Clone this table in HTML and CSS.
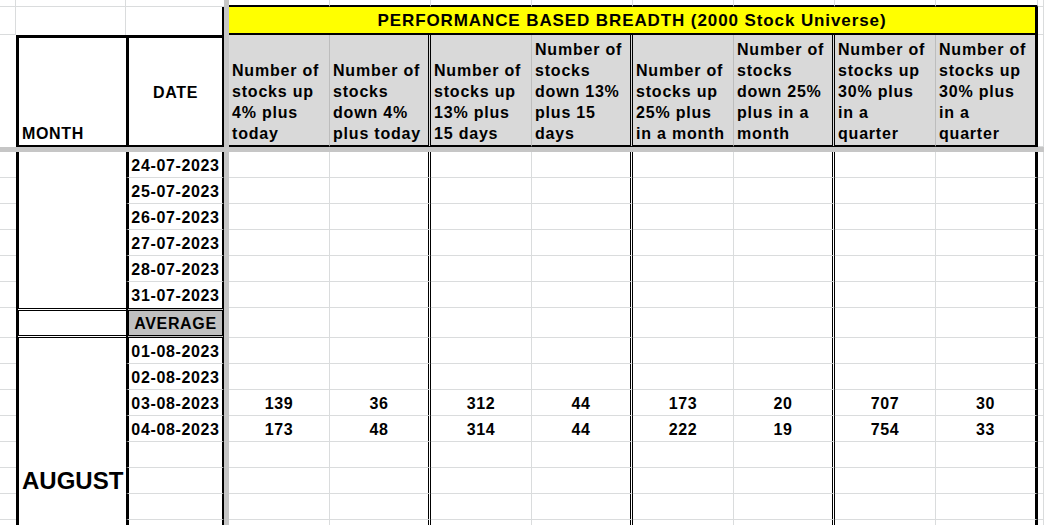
FILE: index.html
```html
<!DOCTYPE html>
<html lang="en">
<head>
<meta charset="utf-8">
<title>Performance Based Breadth</title>
<link rel="stylesheet" href="styles.css">
</head>
<body>
<div class="sheet">
  <div class="tl">
    <div></div><div></div><div class="c1"></div>
    <div></div><div class="b2"></div><div class="c2"></div>
    <div class="a3"></div>
    <div class="b3"><span>MONTH</span></div>
    <div class="c3">DATE</div>
  </div>

  <div class="gut-v"></div>
  <div class="gut-h"></div>

  <div class="tr">
    <div class="r1"></div><div class="r1"></div><div class="r1"></div><div class="r1"></div><div class="r1"></div><div class="r1"></div><div class="r1"></div><div class="r1"></div><div></div>
    <div class="title">PERFORMANCE BASED BREADTH (2000 Stock Universe)</div><div></div>
    <div class="h"><span>Number of<br>stocks up<br>4% plus<br>today</span></div>
    <div class="h dbl"><span>Number of<br>stocks<br>down 4%<br>plus today</span></div>
    <div class="h"><span>Number of<br>stocks up<br>13% plus<br>15 days</span></div>
    <div class="h dbl"><span>Number of<br>stocks<br>down 13%<br>plus 15<br>days</span></div>
    <div class="h"><span>Number of<br>stocks up<br>25% plus<br>in a month</span></div>
    <div class="h dbl"><span>Number of<br>stocks<br>down 25%<br>plus in a<br>month</span></div>
    <div class="h"><span>Number of<br>stocks up<br>30% plus<br>in a<br>quarter</span></div>
    <div class="h end"><span>Number of<br>stocks up<br>30% plus<br>in a<br>quarter</span></div>
    <div></div>
  </div>

  <div class="bl">
    <div></div><div class="mj"></div><div class="d">24-07-2023</div>
    <div></div><div class="d">25-07-2023</div>
    <div></div><div class="d">26-07-2023</div>
    <div></div><div class="d">27-07-2023</div>
    <div></div><div class="d">28-07-2023</div>
    <div></div><div class="d last">31-07-2023</div>
    <div></div><div class="avg-b"></div><div class="avg-c">AVERAGE</div>
    <div></div><div class="ma">AUGUST</div><div class="d">01-08-2023</div>
    <div></div><div class="d">02-08-2023</div>
    <div></div><div class="d">03-08-2023</div>
    <div></div><div class="d">04-08-2023</div>
    <div></div><div class="d"></div>
    <div></div><div class="d"></div>
    <div></div><div class="d"></div>
    <div></div><div class="d"></div>
  </div>

  <div class="br">
    <div></div><div></div><div></div><div></div><div></div><div></div><div></div><div></div><div></div>
    <div></div><div></div><div></div><div></div><div></div><div></div><div></div><div></div><div></div>
    <div></div><div></div><div></div><div></div><div></div><div></div><div></div><div></div><div></div>
    <div></div><div></div><div></div><div></div><div></div><div></div><div></div><div></div><div></div>
    <div></div><div></div><div></div><div></div><div></div><div></div><div></div><div></div><div></div>
    <div></div><div></div><div></div><div></div><div></div><div></div><div></div><div></div><div></div>
    <div></div><div></div><div></div><div></div><div></div><div></div><div></div><div></div><div></div>
    <div></div><div></div><div></div><div></div><div></div><div></div><div></div><div></div><div></div>
    <div></div><div></div><div></div><div></div><div></div><div></div><div></div><div></div><div></div>
    <div>139</div><div>36</div><div>312</div><div>44</div><div>173</div><div>20</div><div>707</div><div>30</div><div></div>
    <div>173</div><div>48</div><div>314</div><div>44</div><div>222</div><div>19</div><div>754</div><div>33</div><div></div>
    <div></div><div></div><div></div><div></div><div></div><div></div><div></div><div></div><div></div>
    <div></div><div></div><div></div><div></div><div></div><div></div><div></div><div></div><div></div>
    <div></div><div></div><div></div><div></div><div></div><div></div><div></div><div></div><div></div>
    <div></div><div></div><div></div><div></div><div></div><div></div><div></div><div></div><div></div>
  </div>
</div>
</body>
</html>
```

FILE: styles.css
```css
* { box-sizing: border-box; margin: 0; padding: 0; }

:root {
  --grid: #dadcdd;
  --freeze: #c6c6c6;
}

html, body {
  width: 1044px;
  height: 525px;
  overflow: hidden;
  background: #fff;
}

body {
  font-family: "Liberation Sans", Arial, sans-serif;
  font-weight: bold;
  font-size: 16px;
  letter-spacing: 0.65px;
  color: #000;
}

.sheet {
  display: grid;
  grid-template-columns: 224px 5px minmax(0, 1fr);
  grid-template-rows: 147px 5px minmax(0, 1fr);
  width: 1044px;
  height: 525px;
  overflow: hidden;
}

.gut-v { grid-column: 2; grid-row: 1 / 4; background: var(--freeze); }
.gut-h { grid-column: 1 / 4; grid-row: 2; background: var(--freeze); }

/* ---------- top-left: corner headers ---------- */
.tl {
  grid-column: 1;
  grid-row: 1;
  display: grid;
  grid-template-columns: 16px 110px 98px;
  grid-template-rows: 7px 28px 112px;
}
.tl > div {
  border-right: 1px solid var(--grid);
  border-bottom: 1px solid var(--grid);
}
.tl .c1 { border-right: none; }
.tl .b2 { border-bottom: none; }
.tl .c2 { border-right: 2px solid #000; border-bottom: none; }
.tl .a3 { border-right: none; border-bottom: none; }
.tl .b3 {
  border: 3px solid #000;
  border-right: none;
  border-bottom-width: 2px;
  display: flex;
  align-items: flex-end;
  padding: 0 2px 1px 3px;
  line-height: 21px;
}
.tl .c3 {
  border: 3px solid #000;
  border-right-width: 2px;
  border-bottom-width: 2px;
  display: flex;
  align-items: center;
  justify-content: center;
  padding-top: 1px;
  line-height: 21px;
}

/* ---------- top-right: title + column headers ---------- */
.tr {
  grid-column: 3;
  grid-row: 1;
  display: grid;
  grid-template-columns: repeat(7, 101px) 102px minmax(0, 1fr);
  grid-template-rows: 7px 28px 112px;
}
.tr > div {
  border-right: 1px solid var(--grid);
  border-bottom: 1px solid var(--grid);
}
.tr .r1 { border-bottom: 2px solid #000; }
.tr .title {
  grid-column: span 8;
  background: #ffff00;
  border-right: 3px solid #000;
  border-bottom: 2px solid #000;
  text-align: center;
  font-size: 17px;
  letter-spacing: 0.9px;
  padding-top: 2px;
  line-height: 24px;
  white-space: nowrap;
}
.tr .h {
  background: #d9d9d9;
  border-right: 1px solid #bdbdbd;
  border-bottom: 2px solid #000;
  display: flex;
  flex-direction: column;
  justify-content: flex-end;
  padding: 0 1px 1px 3px;
  line-height: 21px;
  letter-spacing: 0.8px;
  white-space: nowrap;
  overflow: hidden;
}
.tr .h.dbl { border-right: 3px double #000; }
.tr .h.end { border-right: 3px solid #000; }

/* ---------- bottom-left: month + dates ---------- */
.bl {
  grid-column: 1;
  grid-row: 3;
  display: grid;
  grid-template-columns: 16px 110px 98px;
  grid-template-rows: repeat(6, 26px) 30px repeat(8, 26px);
  overflow: hidden;
}
.bl > div { border-bottom: 1px solid var(--grid); }
.bl .mj {
  grid-row: span 6;
  border-left: 3px solid #000;
  border-bottom: none;
}
.bl .d {
  border-left: 3px solid #000;
  border-right: 2px solid #000;
  text-align: center;
  padding-top: 2px;
  line-height: 23px;
  white-space: nowrap;
}
.bl .d.last { border-bottom: none; }
.bl .avg-b {
  border-left: 3px solid #000;
  border-top: 3px double #000;
  border-bottom: 3px double #000;
}
.bl .avg-c {
  border-left: 3px solid #000;
  border-right: 2px solid #000;
  border-top: 3px double #000;
  border-bottom: 3px double #000;
  background: #c0c0c0;
  text-align: center;
  padding-top: 1px;
  line-height: 23px;
}
.bl .ma {
  grid-row: span 8;
  border-left: 3px solid #000;
  border-bottom: none;
  padding: 129px 0 0 3px;
  font-size: 24px;
  letter-spacing: 0;
  line-height: 28px;
}

/* ---------- bottom-right: values ---------- */
.br {
  grid-column: 3;
  grid-row: 3;
  display: grid;
  grid-template-columns: repeat(7, 101px) 102px minmax(0, 1fr);
  grid-template-rows: repeat(6, 26px) 30px repeat(8, 26px);
  overflow: hidden;
}
.br > div {
  border-right: 1px solid var(--grid);
  border-bottom: 1px solid var(--grid);
  text-align: center;
  padding-top: 2px;
  line-height: 23px;
}
.br > div:nth-child(9n+2),
.br > div:nth-child(9n+4),
.br > div:nth-child(9n+6) { border-right: 3px double #000; }
.br > div:nth-child(9n+8) { border-right: 3px solid #000; }
```
